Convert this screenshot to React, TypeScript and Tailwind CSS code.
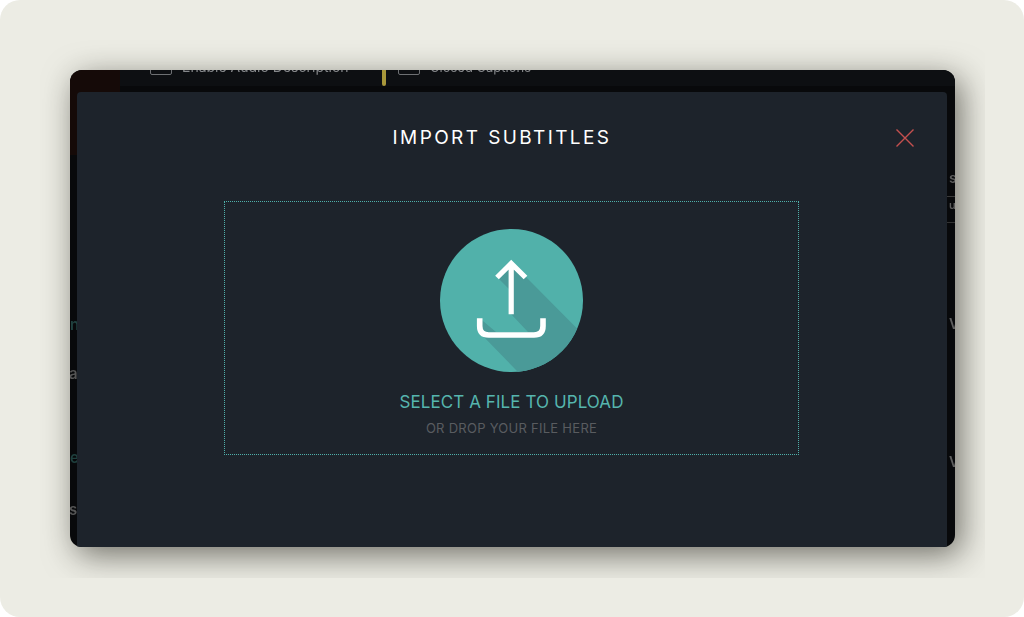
export default function App() {
  return (
    <div className="w-[1024px] h-[617px] bg-white overflow-hidden font-['Inter','Liberation_Sans',sans-serif]">
      <div className="w-full h-full rounded-[20px] bg-[#ecece4] pt-[40px] pl-[40px]">
        <div className="w-[945px] h-[538px] overflow-hidden pt-[30px] pl-[30px]">
          <div className="relative w-[885px] h-[477px] rounded-[12px] overflow-hidden bg-[#08090b] shadow-[6px_8px_32px_rgba(30,28,20,0.6)]">
            {/* Page behind the dialog */}
            <div className="flex h-full">
              <div className="w-[50px] shrink-0 flex flex-col text-[15px] leading-[20px] blur-[0.6px]">
                <div className="h-[85px] shrink-0 bg-[#150a08]" />
                <div className="mt-[160px] text-[#1f403e] font-semibold">n</div>
                <div className="mt-[29px] -ml-[1px] text-[#555] font-semibold">a</div>
                <div className="mt-[64px] text-[#1f403e] font-semibold">e</div>
                <div className="mt-[32px] -ml-[1px] text-[#555] font-semibold">s</div>
              </div>
              <div className="flex-1 min-w-0 flex flex-col">
                <div className="flex h-[16px] bg-[#0d0f12] shrink-0">
                  <div className="flex items-end h-[5px] pl-[30px] gap-[10px] w-[262px] shrink-0">
                    <div className="w-[22px] h-[22px] shrink-0 rounded-[2px] border border-[#6e7073]" />
                    <span className="text-[14px] leading-[16px] text-[#85878a] whitespace-nowrap blur-[0.6px]">Enable Audio Description</span>
                  </div>
                  <div className="w-[4px] h-[16px] rounded-b-[3px] bg-[#a8973a] shrink-0" />
                  <div className="flex items-end h-[5px] pl-[12px] gap-[10px]">
                    <div className="w-[22px] h-[22px] shrink-0 rounded-[2px] border border-[#6e7073]" />
                    <span className="text-[13px] leading-[16px] text-[#85878a] whitespace-nowrap blur-[0.6px]">Closed Captions</span>
                  </div>
                </div>
                <div className="flex flex-col items-end text-[#5e5e5e] font-semibold text-[14px] leading-[18px] blur-[0.5px]">
                  <div className="mt-[83px] w-[6px]">s</div>
                  <div className="mt-[9px] w-[8px] border-t border-[#3a3a3a] pl-[2px] pt-[1px] text-[11px] leading-[14px]">u</div>
                  <div className="mt-[10px] w-[8px] h-px bg-[#333]" />
                  <div className="mt-[92px] w-[6px]">V</div>
                  <div className="mt-[120px] w-[6px]">V</div>
                </div>
              </div>
            </div>

            {/* Dialog */}
            <div className="absolute left-[7px] right-[8px] top-[22px] bottom-0 rounded-t-[4px] bg-[#1d232b] flex flex-col">
              <div className="relative h-[109px] shrink-0 pr-[20px] pt-[33px] text-center">
                <h1 className="text-[19px] leading-[26px] font-normal tracking-[2.4px] text-white">IMPORT SUBTITLES</h1>
                <svg className="absolute left-[817.5px] top-[36px]" width="20" height="20" viewBox="0 0 20 20" fill="none" stroke="#c4504f" strokeWidth="1.4">
                  <path d="M1.5 1.5 L18.5 18.5 M18.5 1.5 L1.5 18.5" />
                </svg>
              </div>
              <div className="ml-[147px] w-[575px] h-[254px] border border-dotted border-[#4fb0aa] flex flex-col items-center pt-[27px]">
                <svg width="143" height="143" viewBox="0 0 143 143" className="shrink-0 block">
                  <defs>
                    <clipPath id="disc">
                      <circle cx="71.5" cy="71.5" r="71.5" />
                    </clipPath>
                  </defs>
                  <circle cx="71.5" cy="71.5" r="71.5" fill="#51b1aa" />
                  <path clipPath="url(#disc)" fill="#4a9a98" d="M71 33 L86 48 L180 143 L110 176 L40 104 L39.7 89.3 L56 103 L88 103 L71 85 L71 62 L57 48 Z" />
                  <path d="M57 48.5 L71.2 34.5 L85.5 48.5 M71.2 35 L71.2 85.3" fill="none" stroke="#fff" strokeWidth="5.2" />
                  <path d="M39.7 89.3 V97 Q39.7 106 48.7 106 H94 Q103 106 103 97 V89.3" fill="none" stroke="#fff" strokeWidth="5.6" />
                </svg>
                <div className="mt-[18px] text-[17px] leading-[24px] tracking-[0.08px] text-[#56b5ae] whitespace-nowrap">SELECT A FILE TO UPLOAD</div>
                <div className="mt-[5px] text-[13px] leading-[18px] tracking-[0.27px] text-[#595c60] whitespace-nowrap">OR DROP YOUR FILE HERE</div>
              </div>
            </div>
          </div>
        </div>
      </div>
    </div>
  );
}
